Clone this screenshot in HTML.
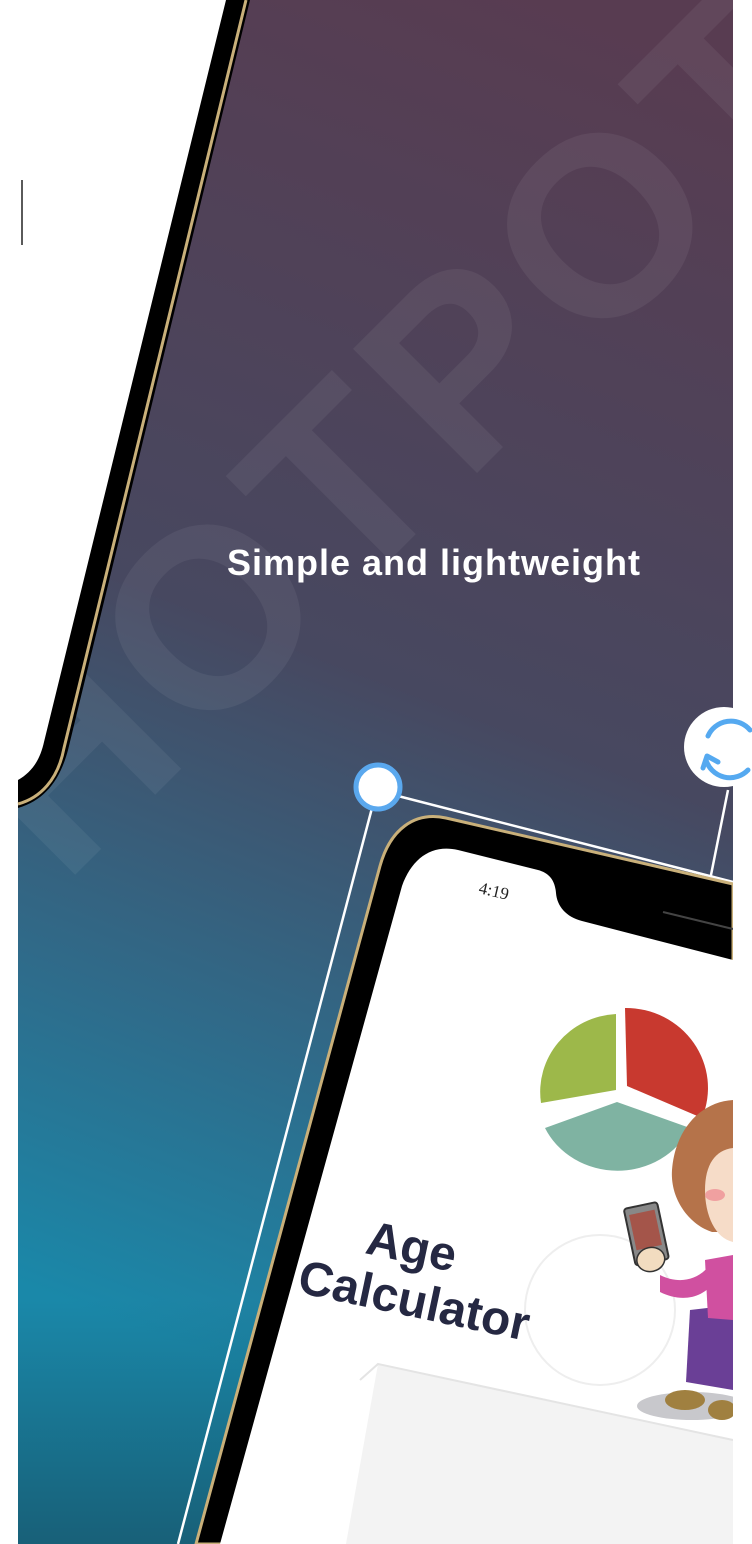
<!DOCTYPE html>
<html><head><meta charset="utf-8"><style>
html,body{margin:0;padding:0;background:#fff;width:752px;height:1544px;overflow:hidden}
svg{display:block}
</style></head><body>
<svg width="752" height="1544" viewBox="0 0 752 1544" xmlns="http://www.w3.org/2000/svg">
<defs>
<linearGradient id="bg" gradientUnits="userSpaceOnUse" x1="560" y1="0" x2="60" y2="1300">
<stop offset="0" stop-color="#583c51"/>
<stop offset="0.5" stop-color="#474860"/>
<stop offset="0.78" stop-color="#2f6b8a"/>
<stop offset="1" stop-color="#1a88a9"/>
</linearGradient>
<linearGradient id="bot" x1="0" y1="0" x2="0" y2="1">
<stop offset="0" stop-color="#17566c" stop-opacity="0"/>
<stop offset="1" stop-color="#17566c" stop-opacity="0.8"/>
</linearGradient>
<clipPath id="dk"><path d="M250,0 L733,0 L733,1544 L18,1544 L18,808 C45,800 60,780 68,750 Z"/></clipPath>
</defs>
<line x1="22" y1="180" x2="22" y2="245" stroke="#222" stroke-width="1.5"/>
<path d="M226,0 L733,0 L733,1544 L18,1544 L18,780 C32,772 40,760 44,742 Z" fill="#000"/>
<path d="M250,0 L733,0 L733,1544 L18,1544 L18,808 C45,800 60,780 68,750 Z" fill="url(#bg)"/>
<rect x="18" y="1300" width="400" height="244" fill="url(#bot)" clip-path="url(#dk)"/>
<path d="M246,0 L64,748 C58,780 40,798 18,804" fill="none" stroke="#c9b07a" stroke-width="3"/>
<g clip-path="url(#dk)">
<text x="0" y="0" transform="translate(460,490) rotate(-45)" text-anchor="middle" font-family="Liberation Sans, sans-serif" font-weight="bold" font-size="255" fill="#fff" fill-opacity="0.06" letter-spacing="10">HOTPOT</text>
</g>
<text x="434" y="575" text-anchor="middle" font-family="Liberation Sans, sans-serif" font-weight="bold" font-size="36" letter-spacing="1" fill="#fff">Simple and lightweight</text>
<line x1="372" y1="808" x2="178" y2="1544" stroke="#fff" stroke-width="2.5"/>
<line x1="398" y1="796" x2="733" y2="882" stroke="#fff" stroke-width="2.5"/>
<line x1="728" y1="790" x2="710" y2="880" stroke="#fff" stroke-width="2.5"/>
<path d="M733,884 L446,818 C414,811 390,830 380,866 L196,1544 L733,1544 Z" fill="#000" stroke="#c9b07a" stroke-width="3"/>
<path d="M733,960 L582,921 C566,917 557,906 556,893 C555,880 549,873 538,870 L458,850 C432,844 412,858 402,886 L220,1544 L733,1544 Z" fill="#fff"/>
<line x1="663" y1="912" x2="733" y2="929" stroke="#444" stroke-width="2"/>
<text x="0" y="0" transform="translate(478,893) rotate(13)" font-family="Liberation Serif, serif" font-size="17" fill="#222">4:19</text>
<circle cx="600" cy="1310" r="75" fill="none" stroke="#eee" stroke-width="2"/>
<path d="M616,1090 L616,1014 A80,78 0 0 0 541,1103 Z" fill="#9db84a"/>
<path d="M617,1102 L545,1128 A80,74 0 0 0 690,1128 Z" fill="#7fb3a2"/>
<path d="M627,1086 L625,1008 A82,80 0 0 1 702,1118 Z" fill="#c8392f"/>
<text x="0" y="0" transform="translate(364,1253) rotate(12)" font-family="Liberation Sans, sans-serif" font-weight="bold" font-size="48" fill="#252842">Age</text>
<text x="0" y="0" transform="translate(296,1292) rotate(12)" font-family="Liberation Sans, sans-serif" font-weight="bold" font-size="48" fill="#252842">Calculator</text>
<ellipse cx="692" cy="1406" rx="55" ry="14" fill="#c8c8cc"/>
<path d="M690,1310 L733,1305 L733,1390 L686,1382 Z" fill="#6a3f96"/>
<path d="M705,1260 L733,1255 L733,1320 L708,1318 Z" fill="#d050a0"/>
<path d="M660,1275 C680,1285 700,1280 712,1262 L716,1280 C702,1300 680,1302 660,1292 Z" fill="#d050a0"/>
<ellipse cx="685" cy="1400" rx="20" ry="10" fill="#a08040"/>
<ellipse cx="722" cy="1410" rx="14" ry="10" fill="#a08040"/>
<path d="M733,1100 C700,1102 675,1130 672,1170 C670,1200 690,1225 712,1232 L733,1232 Z" fill="#b5734a"/>
<path d="M733,1148 C715,1150 705,1165 705,1190 C705,1215 715,1238 733,1242 Z" fill="#f6dcc8"/>
<ellipse cx="715" cy="1195" rx="10" ry="6" fill="#f0a0a0"/>
<g transform="rotate(-12 646 1237)"><rect x="630" y="1205" width="34" height="58" rx="3" fill="#888" stroke="#333" stroke-width="2"/>
<rect x="634" y="1212" width="26" height="36" fill="#b04030" opacity="0.7"/>
<ellipse cx="646" cy="1260" rx="14" ry="12" fill="#f2dcc0" stroke="#333" stroke-width="1.5"/></g>
<path d="M378,1364 L733,1440 L733,1544 L346,1544 Z" fill="#f3f3f3"/>
<path d="M360,1380 L378,1364 L733,1440" fill="none" stroke="#e4e4e4" stroke-width="2"/>
<rect x="733" y="0" width="19" height="1544" fill="#fff"/>
<circle cx="378" cy="787" r="22" fill="#fff" stroke="#5aa8ee" stroke-width="5"/>
<circle cx="724" cy="747" r="40" fill="#fff"/>
<path d="M708,736 A25,25 0 0 1 750,730" fill="none" stroke="#55a9f0" stroke-width="5" stroke-linecap="round"/>
<path d="M706,760 A25,25 0 0 0 748,770" fill="none" stroke="#55a9f0" stroke-width="5" stroke-linecap="round"/>
<path d="M703,768 L707,756 L718,762" fill="none" stroke="#55a9f0" stroke-width="5" stroke-linecap="round" stroke-linejoin="round"/>
</svg>
</body></html>
